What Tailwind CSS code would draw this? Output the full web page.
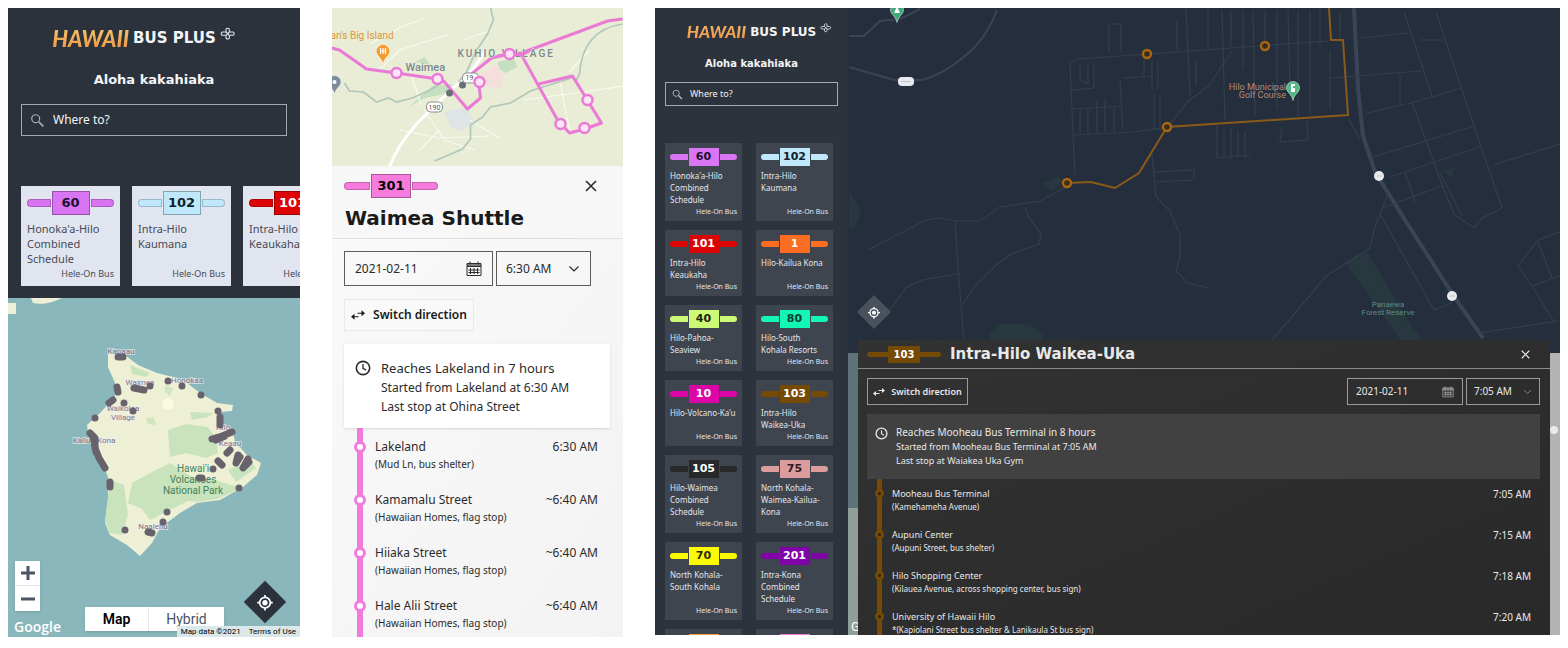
<!DOCTYPE html>
<html lang="en">
<head>
<meta charset="utf-8">
<title>Hawaii Bus Plus</title>
<script src="https://cdn.jsdelivr.net/npm/@tailwindcss/browser@4"></script>
</head>
<body class="bg-white font-['Noto_Sans','Open_Sans',sans-serif]">
<svg class="hidden">
  <symbol id="search" viewBox="0 0 24 24"><path fill="currentColor" d="M9.5 3a6.5 6.5 0 0 1 5 10.6l.3.4h.7l5.5 5.5-1.5 1.5-5.5-5.5v-.8l-.3-.2A6.5 6.5 0 1 1 9.5 3m0 1.7a4.8 4.8 0 1 0 0 9.6 4.8 4.8 0 0 0 0-9.6"/></symbol>
  <symbol id="plus" viewBox="0 0 24 20"><path fill="none" stroke="currentColor" stroke-width="1.6" d="M9 3c0-2 5-2 5 0v4h5c3 0 3 5 0 5h-5v4c0 2-5 2-5 0v-4H4c-3 0-3-5 0-5h5zM9 7l5 5M14 7l-5 5"/></symbol>
  <symbol id="locate" viewBox="0 0 24 24"><circle cx="12" cy="12" r="7.5" fill="none" stroke="currentColor" stroke-width="2.4"/><circle cx="12" cy="12" r="3.8" fill="currentColor"/><path stroke="currentColor" stroke-width="2.4" d="M12 1v4M12 19v4M1 12h4M19 12h4"/></symbol>
  <symbol id="close" viewBox="0 0 12 12"><path stroke="currentColor" stroke-width="1.6" d="M1 1l10 10M11 1L1 11"/></symbol>
  <symbol id="swap" viewBox="0 0 24 16"><path fill="currentColor" d="M18 0l6 5-6 5V6h-7V4h7zM6 6v4h7v2H6v4L0 11z"/></symbol>
  <symbol id="clock" viewBox="0 0 24 24"><circle cx="12" cy="12" r="10" fill="none" stroke="currentColor" stroke-width="2.4"/><path fill="none" stroke="currentColor" stroke-width="2" d="M12 6v6.5l4.5 2.7"/></symbol>
  <symbol id="calendar" viewBox="0 0 16 16"><path fill="none" stroke="currentColor" stroke-width="1" d="M1 2.5h14v12H1zM1 5.5h14M4 .5v3M12 .5v3M4.500 7v6M8 7v6M11.500 7v6M2.500 9h11M2.500 11.500h11"/><path fill="currentColor" d="M1 2.500h14v3H1z" opacity=".6"/></symbol>
  <symbol id="chevron" viewBox="0 0 12 8"><path fill="none" stroke="currentColor" stroke-width="1.200" d="M1.500 1.500L6 6l4.500-4.500"/></symbol>
  <symbol id="pin" viewBox="0 0 14 20"><path stroke="#fff" stroke-opacity=".5" d="M7 .5a6.500 6.500 0 0 1 6.500 6.500C13.500 11.500 8 13 7 19.500 6 13 .5 11.500.5 7A6.500 6.500 0 0 1 7 .5"/></symbol>
</svg>

<div class="grid h-screen grid-cols-[292fr_291fr_905fr] gap-8 px-2 pt-2 pb-[11px]">

  <!-- Mobile home -->
  <section class="flex min-w-0 flex-col overflow-hidden bg-[#2c323c]">
    <header class="flex flex-col px-[13px] pt-[14px] pb-3 text-white">
      <div class="flex h-8 items-center justify-center gap-1 pr-5">
        <span class="bg-linear-to-b from-[#f0d070] to-[#f08a3c] bg-clip-text font-['Lato',sans-serif] text-[22px] font-black text-transparent italic">HAWAII</span>
        <span class="font-['DejaVu_Sans',sans-serif] text-[15px] font-bold whitespace-nowrap text-gray-100">BUS PLUS</span>
        <svg class="mb-2 h-[14px] w-4 shrink-0 text-gray-200"><use href="#plus"/></svg>
      </div>
      <h1 class="mt-3 text-center font-['DejaVu_Sans',sans-serif] text-[13px] leading-7 font-bold text-gray-100">Aloha kakahiaka</h1>
      <label class="mt-[10px] flex h-8 items-center gap-[7px] border border-[#a3a7ae] px-[7px]">
        <svg class="size-[17px] shrink-0 text-[#b5b8bd]"><use href="#search"/></svg>
        <input type="text" placeholder="Where to?" class="min-w-0 flex-1 text-[12px] outline-none placeholder:text-gray-100">
      </label>
      <div id="mobile-routes" class="mt-[50px] -mr-[13px] flex gap-3 overflow-hidden"></div>
    </header>
    <div class="relative min-h-0 flex-1 overflow-hidden">
      <svg class="size-full" viewBox="8 298 292 339" preserveAspectRatio="xMidYMid slice" font-family="Roboto, sans-serif">
        <rect x="-400" y="0" width="1200" height="1000" fill="#8ab7bb"/>
        <path fill="#eef0d5" d="M8 303h8v11H8zM31 298h31q-16 8-29 5zM108 353l17 2 13 10 19 8 16 4 14 6 13 10 17 10 16 2-1 6-12 1 2 11 11 9 2 10 12 13 14 8-4 12-14 12-23 13-23 3-17 10-20 15-8 15-12 13-13-11-17-10-5-12 3-23V477l-8-20-12-24-1-8 13-12 15-16v-14l-7-16z"/>
        <g fill="#c9e3bc">
          <path d="M130 365l20 8-4 4-14-3zM168 430l18-6 22 3 8 12 2 14-12 5-20-5-16 4zM132 483l22-12 16-8 22 14 14 8 4 10 7 2-27 3-28 14-12 6-8-11-14-6zM180 500l28-22 34 10-25 11-20 3zM110 480l14 5 4 30-6 20-12-2-5-12zM228 470l22-10 6 8-20 14zM190 412l24 1-6 4-16 3z"/>
        </g>
        <path fill="#cfe6bf" d="M146 418l8-1 2 8-8-1zM165 385l8 3-3 8-5-4z"/>
        <circle cx="168" cy="404" r="6" fill="#fafbe0"/>
        <g font-size="8" fill="#7c7486" text-anchor="middle" stroke="#f0edf2" stroke-width="2" stroke-opacity=".6" paint-order="stroke">
          <text x="121" y="354">Kapaau</text><text x="140" y="385">Waimea</text><text x="187" y="383">Honokaa</text><text x="123" y="411">Waikoloa</text><text x="123" y="420">Village</text><text x="94" y="443">Kailua-Kona</text><text x="223" y="430">Hilo</text><text x="230" y="446">Keaau</text><text x="153" y="529">Naalehu</text>
        </g>
        <g font-size="10" fill="#43805a" text-anchor="middle"><text x="193" y="472">Hawai'i</text><text x="193" y="483">Volcanoes</text><text x="193" y="494">National Park</text></g>
        <g stroke="#67626b" stroke-width="7" stroke-linecap="round" stroke-linejoin="round" fill="none">
          <path d="M118 357h5M117 387l1 5M134 388l10 2M150 386h0M168 381h0M182 386h0M201 395h0M109 403l4-3M124 403h0M133 411h0M95 418h0M218 411h0M220 417v8M90 433l5 5v10l4 10 6 10M93 436l3 16M110 482v5M212 439l10-3 10-4M216 440l9-4M227 453l3-3M218 461l4 4M238 455l-2 8 4-6M248 459l-5 9 6-6M213 469h0M199 478h3M239 488h0M167 512h0M163 522h0M148 532l4 1M125 530h0"/>
        </g>
      </svg>
      <div class="absolute bottom-[26px] left-[7px] flex w-[25px] flex-col divide-y divide-gray-200 bg-white text-gray-600 shadow">
        <button aria-label="Zoom in" class="grid h-[25px] place-items-center"><svg class="size-[14px]" viewBox="0 0 14 14"><path stroke="currentColor" stroke-width="3" d="M7 0v14M0 7h14"/></svg></button>
        <button aria-label="Zoom out" class="grid h-[25px] place-items-center"><svg class="size-[14px]" viewBox="0 0 14 14"><path stroke="currentColor" stroke-width="3" d="M0 7h14"/></svg></button>
      </div>
      <span class="absolute bottom-0 left-[6px] font-['Open_Sans',sans-serif] text-[14px] font-semibold text-white">Google</span>
      <div class="absolute bottom-[6px] left-[77px] flex h-6 bg-white font-['Roboto',sans-serif] text-[14px] shadow">
        <button class="w-[63px] font-semibold text-black">Map</button><button class="w-[76px] border-l border-gray-200 text-gray-600">Hybrid</button>
      </div>
      <div class="absolute right-0 bottom-0 flex h-[11px] items-center gap-2 bg-[#dbe7e8] px-1 font-['Roboto',sans-serif] text-[8px] text-black"><span>Map data ©2021</span><a href="#terms">Terms of Use</a></div>
      <button aria-label="My location" class="absolute right-5 bottom-5 grid size-[30px] rotate-45 place-items-center bg-[#2c323c] text-white"><svg class="size-[17px] -rotate-45"><use href="#locate"/></svg></button>
    </div>
  </section>

  <!-- Mobile route details -->
  <section class="flex min-w-0 flex-col overflow-hidden bg-[#f7f7f7] text-[#2b2b2b]">
    <svg class="h-[158px] w-full shrink-0" viewBox="332 8 292 158" preserveAspectRatio="xMidYMid slice" font-family="Roboto, sans-serif">
      <rect x="0" y="0" width="1200" height="300" fill="#e9edd5"/>
      <path fill="#c5dfc0" d="M408 108l25-22 20-2-8 10-20 4-14 8zM498 62l16-4 4 9-12 6-6-4zM416 62l9-5 6 8z"/>
      <path fill="#f5dfdc" d="M481 74l16-10 8 15-4 9-18-2z"/><path fill="#dfe4e4" d="M445 112l22-5 8 14-12 10-12-4z"/>
      <g fill="none" stroke="#f8faef" stroke-width="1.200"><path d="M370 44l30-16 25-10M380 70l20-20 50-16M400 130l40 8 50-2M425 110l20 30 30 10M410 70l12 36M440 130l-20 20M470 120l30 18M524 100l60-8 40-6M492 30l-28 10M560 80l10 50M590 50l-20 22"/></g>
      <path fill="none" stroke="#fff" stroke-width="3" d="M390 167q8-22 28-44 34-34 46-44t22-30"/>
      <g fill="none" stroke="#b2c7bb" stroke-width="1.700"><path d="M491 8l3 12-6 14-12 18-9 20-8 10M345 83l5 8 14 1 13 10 12-4 8 4 16-4 18-8 14-10M435 161l28-12 8-10v-14l12-8 8-10 20-4 20-12 44-14M623 24q-40 6-43 50l-4 8"/></g>
      <path fill="none" stroke="#ea7ad6" stroke-width="3" stroke-linejoin="round" d="M332 48l8 2 27 19 30 4 41 6 7 3 23 27 13-11-2-16-6-9 19-15 18-4 12-1 86-32 15-2M522 55l36 65 12 13 15-4 17-6-29-47-34 8"/>
      <circle cx="450" cy="93" r="3.500" fill="#687074"/><circle cx="463" cy="85" r="3.500" fill="#687074"/>
      <g fill="#fff" stroke="#8a8f90"><rect x="427" y="102" width="16" height="10" rx="4"/><rect x="463" y="73" width="16" height="10" rx="4"/></g>
      <g font-size="7" fill="#555" text-anchor="middle"><text x="435" y="110">190</text><text x="470" y="80">19</text></g>
      <g font-weight="500" fill="#7b8793" stroke="#e9edd5" stroke-width="1" paint-order="stroke"><text x="406" y="71" font-size="11">Waimea</text><text x="458" y="57" font-size="10" letter-spacing="2">KUHIO VILLAGE</text></g>
      <path fill="none" stroke="#ea7ad6" stroke-width="3" d="M498 56l12-2 12 1 8-4"/>
      <text x="331" y="39" font-size="10" fill="#d99540">an's Big Island</text>
      <g fill="#fde4f8" stroke="#ea7ad6" stroke-width="2.400"><circle cx="397" cy="73" r="5"/><circle cx="438" cy="79" r="5"/><circle cx="480" cy="82" r="5"/><circle cx="510" cy="54" r="5"/><circle cx="588" cy="100" r="5"/><circle cx="561" cy="124" r="5"/><circle cx="585" cy="128" r="5"/></g>
      <use href="#pin" x="376" y="44" width="15" height="21" fill="#f39c2c"/><path d="M381 48v6M383.500 48v6M386 48v6M381 51h5" stroke="#fff" stroke-width="1.200"/>
      <use href="#pin" x="328" y="75" width="14" height="20" fill="#7d8c9c"/><circle cx="335" cy="82" r="2" fill="#fff"/>
    </svg>
    <div class="flex flex-col border-b border-[#e0e0e0] px-3 pt-2">
      <div class="flex items-center justify-between">
        <div class="flex items-center" data-badge="301|#f57bdc|#000|lg"></div>
        <button aria-label="Close" class="mr-[10px] p-1"><svg class="size-3"><use href="#close"/></svg></button>
      </div>
      <h2 class="mt-1 pb-1 pl-px font-['DejaVu_Sans',sans-serif] text-[20px] leading-8 font-bold text-[#1a1a1a]">Waimea Shuttle</h2>
    </div>
    <div class="flex min-h-0 flex-1 flex-col bg-linear-to-br from-[#f9f9f9] to-[#f3f3f3] pt-3 pr-[13px] pl-3">
      <div class="flex gap-[3px] text-[12px]">
        <label class="flex h-[35px] w-[149px] items-center border border-[#5c5c5c] px-[10px]">
          <input type="text" value="2021-02-11" aria-label="Date" class="min-w-0 flex-1 outline-none"><svg class="size-4 shrink-0"><use href="#calendar"/></svg>
        </label>
        <div class="grid h-[35px] w-[95px] items-center border border-[#5c5c5c]">
          <select aria-label="Time" class="h-full appearance-none pl-[9px] outline-none [grid-area:1/1]"><option>6:30 AM</option></select>
          <svg class="pointer-events-none mr-[10px] h-2 w-3 justify-self-end [grid-area:1/1]"><use href="#chevron"/></svg>
        </div>
      </div>
      <button class="mt-[13px] flex h-8 w-[130px] items-center justify-center gap-2 border border-[#e9e9e9] bg-[#f9f9f9] text-[12px] font-semibold text-[#1a1a1a]"><svg class="h-[10px] w-[14px]"><use href="#swap"/></svg>Switch direction</button>
      <div class="mt-[13px] flex gap-[10px] bg-white px-[11px] pt-[14px] pb-3 shadow">
        <svg class="mt-[2px] size-4 shrink-0"><use href="#clock"/></svg>
        <div><p class="text-[13px] leading-5">Reaches Lakeland in 7 hours</p><p class="text-[12px] leading-[19px]">Started from Lakeland at 6:30 AM</p><p class="text-[12px] leading-[19px]">Last stop at Ohina Street</p></div>
      </div>
      <ol id="mobile-stops" class="min-h-0 flex-1 overflow-hidden"></ol>
    </div>
  </section>

  <!-- Desktop -->
  <section class="mb-[2px] grid min-w-0 grid-cols-[193px_minmax(0,1fr)] overflow-hidden bg-[#2d333d] text-white">
    <aside class="flex min-h-0 flex-col overflow-hidden px-[10px] pt-3">
      <div class="flex h-6 items-center justify-center gap-1 pl-4">
        <span class="bg-linear-to-b from-[#f0c070] to-[#f08a3c] bg-clip-text font-['Lato',sans-serif] text-[17px] font-black text-transparent italic">HAWAII</span>
        <span class="font-['DejaVu_Sans',sans-serif] text-[12px] font-bold whitespace-nowrap text-gray-100">BUS PLUS</span>
        <svg class="mb-2 h-[10px] w-3 shrink-0 text-gray-200"><use href="#plus"/></svg>
      </div>
      <h1 class="mt-[10px] text-center font-['DejaVu_Sans',sans-serif] text-[10px] leading-5 font-bold text-gray-100">Aloha kakahiaka</h1>
      <label class="mt-2 flex h-6 shrink-0 items-center gap-[6px] border border-[#a3a7ae] px-[5px]">
        <svg class="size-[13px] shrink-0 text-[#c5c8cd]"><use href="#search"/></svg>
        <input type="text" placeholder="Where to?" class="min-w-0 flex-1 text-[9px] outline-none placeholder:text-gray-100">
      </label>
      <div id="desktop-routes" class="mt-[37px] mr-[5px] grid shrink-0 grid-cols-2 gap-x-[14px] gap-y-[9px]"></div>
    </aside>
    <main class="grid min-h-0 grid-cols-[minmax(0,1fr)] grid-rows-[332fr_295fr] overflow-hidden">
      <div class="relative row-span-2 overflow-hidden [grid-area:1/1/3/2]">
        <svg class="absolute inset-0 size-full" viewBox="848 8 712 627" preserveAspectRatio="xMidYMid slice" font-family="Roboto, sans-serif">
          <rect x="600" y="0" width="1200" height="700" fill="#252e3d"/>
          <path fill="#5d7379" d="M848 353h20v155h-20z"/><path fill="#909e9a" d="M848 508h20v130h-20z"/><path fill="#b3b3b3" d="M1540 353h30v290h-30z"/>
          <path fill="#27393f" d="M849 192l12 18-6 18-6 2zM1345 262l22-10 42 70 22 30h-22zM989 334l10-10h30l14 10v10h-54zM1042 184l16-8 4 6-10 9zM1443 170l12-2-4 10z"/>
          <g fill="none" stroke="#3a4454">
            <g stroke-width="2"><path d="M849 67l45 13h28q24-6 52-32 15-16 23-38M849 36h15l16-15 20-2 20-10"/></g>
            <path stroke-width="4" d="M1354 8l4 80 5 48 12 36 30 48 50 78 28 40"/>
          </g>
          <g fill="none" stroke="#343e4e" stroke-width="1.200">
            <path d="M868 250l58-30 14-2 16 3h24l20-14 40-6 30-16M955 220l4 60 5 60M890 310l16-22 16-8 36-6M1025 208l4 10 12 16-2 10-28 10-16 12-20 20-12 18M1072 62l6-3 70-5 110-8 70-5M1070 62l3 72 2 42M1074 135l60-3 34-5 20-26 20-14 24-36M1072 90l22-2V64M1080 66v14l8 4V64M1072 109l50-3M1080 110v23M1088 109v24M1097 100v33M1105 98v34M1114 108v24M1120 80l3 50M1123 78l30-2M1109 52V24h12v28M1144 60v16M1152 60v30M1158 62v26M1154 94v36M1160 95v36M1186 8l4 88M1177 20v30M1196 60v26M1152 155l4 42 14 14 10 24v22l-4 14 12 12 20 5M1154 172l40-2v10l-38 2"/>
            <path d="M1208 10v36M1222 10l3 110M1231 10v36M1243 10v60M1253 10l2 106M1265 10v30M1277 10v100M1288 10l2 80M1298 10v106M1310 10v104M1320 10v36M1330 50v60M1340 12v30M1217 125v33M1224 130v28M1231 128v30M1238 130v27M1245 132v26M1218 158l32-3M1282 126l-2 16 28-2-1-20M1330 78l92-7M1360 38l48-5M1404 12l28 84M1436 12l34 102 32 94-20 10-8 10-20-14-10-24-32-88M1408 104l54-16M1370 158l104-32M1390 177l90-30M1420 40h24M1400 76v26M1348 118l12 22M1382 208l60-22M1405 172l10 30M1380 214l54 96 18-7M1388 194l-14 36-4 18-44 28-30 36-24 28M1493 165l70-22M1440 172l22 44M1560 232l-22 8-20 26 14 20 22 36M1538 242l14 36M1532 286l28-10M1478 333l80-12M1365 114l40-10"/>
          </g>
          <path fill="none" stroke="#8a5a18" stroke-width="2" d="M1067 183l24-1 24 6 24-15 28-46 181-12-5-75h-12l-2-32"/>
          <g fill="#3a2d22" stroke="#a9680f" stroke-width="2.400"><circle cx="1067" cy="183" r="4"/><circle cx="1167" cy="127" r="4"/><circle cx="1147" cy="54" r="4"/><circle cx="1265" cy="46" r="4"/></g>
          <g fill="#e8eaf0"><rect x="898" y="77" width="16" height="9" rx="4"/><ellipse cx="1379" cy="176" rx="5" ry="5"/><ellipse cx="1452" cy="296" rx="5" ry="5"/><circle cx="1554" cy="430" r="4"/></g><path stroke="#bcc4cc" d="M901 81.500h10M1377 176h5M1450 296h5"/>
          <use href="#pin" x="890" y="3" width="14" height="20" fill="#3fa877"/><path d="M897 6l3 7h-6z" fill="#fff"/>
          <use href="#pin" x="1286" y="81" width="14" height="20" fill="#4dbb83"/><path d="M1291 84h4v2h-2v2h2v4h-4z" fill="#fff"/>
          <g font-size="9" fill="#b58a78" text-anchor="end"><text x="1286" y="90">Hilo Municipal</text><text x="1286" y="98">Golf Course</text></g>
          <g font-size="8" fill="#5f8a82" text-anchor="middle"><text x="1388" y="307">Panaewa</text><text x="1388" y="315">Forest Reserve</text></g>
          <text x="851" y="631" font-size="13" fill="#fff">G</text>
        </svg>
        <button aria-label="My location" class="absolute top-[292px] left-[14px] grid size-6 rotate-45 place-items-center bg-[#4a515d] text-white"><svg class="size-[13px] -rotate-45"><use href="#locate"/></svg></button>
      </div>
      <article class="relative mr-[10px] ml-[10px] flex min-h-0 flex-col overflow-hidden bg-linear-to-br from-[#323232] to-[#292929] text-[#e8e8e8] [grid-area:2/1]">
        <header class="flex h-[29px] shrink-0 items-center border-b border-[#8a8a8a] pl-[9px]">
          <div class="flex items-center" data-badge="103|#754a05|#fff|sm"></div>
          <h2 class="ml-[9px] font-['DejaVu_Sans',sans-serif] text-[15px] leading-6 font-bold">Intra-Hilo Waikea-Uka</h2>
          <button aria-label="Close" class="mr-5 ml-auto"><svg class="size-[9px]"><use href="#close"/></svg></button>
        </header>
        <div class="flex min-h-0 flex-1 flex-col pt-[9px] pr-[10px] pl-[9px]">
          <div class="flex gap-[3px] text-[10px]">
            <button class="mr-auto flex h-[27px] w-[101px] items-center justify-center gap-[6px] border border-[#9a9a9a] text-[9px] font-semibold whitespace-nowrap"><svg class="h-2 w-3 shrink-0"><use href="#swap"/></svg>Switch direction</button>
            <label class="flex h-[27px] w-[116px] items-center border border-[#9a9a9a] px-2">
              <input type="text" value="2021-02-11" aria-label="Date" class="min-w-0 flex-1 outline-none"><svg class="size-3 shrink-0 text-[#a5a5a5]"><use href="#calendar"/></svg>
            </label>
            <div class="grid h-[27px] w-[74px] items-center border border-[#9a9a9a]">
              <select aria-label="Time" class="h-full appearance-none pl-[7px] outline-none [grid-area:1/1]"><option>7:05 AM</option></select>
              <svg class="pointer-events-none mr-[7px] h-[6px] w-[9px] justify-self-end text-[#8a8a8a] [grid-area:1/1]"><use href="#chevron"/></svg>
            </div>
          </div>
          <div class="mt-[9px] flex gap-2 bg-[#414141] px-2 py-[11px]">
            <svg class="mt-[2px] size-[13px] shrink-0"><use href="#clock"/></svg>
            <div><p class="text-[10px] leading-[15px]">Reaches Mooheau Bus Terminal in 8 hours</p><p class="text-[9px] leading-[14px]">Started from Mooheau Bus Terminal at 7:05 AM</p><p class="text-[9px] leading-[14px]">Last stop at Waiakea Uka Gym</p></div>
          </div>
          <ol id="desktop-stops" class="min-h-0 flex-1 overflow-hidden"></ol>
        </div>
      </article>
    </main>
  </section>
</div>

<script>
const badge = (n, bg, fg, size) => size === 'lg'
  ? `<i class="h-2 w-[26px] rounded-l-full border border-black/20" style="background:${bg}"></i><b class="mx-px grid h-6 w-10 place-items-center border border-black/30 font-['DejaVu_Sans',sans-serif] text-[13px] font-bold" style="background:${bg};color:${fg}">${n}</b><i class="h-2 w-[26px] rounded-r-full border border-black/20" style="background:${bg}"></i>`
  : `<i class="h-[5px] w-[21px] rounded-l-full" style="background:${bg}"></i><b class="grid h-[17px] w-[32px] place-items-center font-['DejaVu_Sans',sans-serif] text-[10px] font-bold" style="background:${bg};color:${fg}">${n}</b><i class="h-[5px] w-[21px] rounded-r-full" style="background:${bg}"></i>`;
document.querySelectorAll('[data-badge]').forEach(e => e.innerHTML = badge(...e.dataset.badge.split('|')));

const routes = [
  ['60', "Honoka'a-Hilo Combined Schedule", '#d974f2', '#1c1030'],
  ['102', 'Intra-Hilo Kaumana', '#bfe9fa', '#10202c'],
  ['101', 'Intra-Hilo Keaukaha', '#dc0404', '#fff'],
  ['1', 'Hilo-Kailua Kona', '#fb6d20', '#fff'],
  ['40', 'Hilo-Pahoa-Seaview', '#ccfa76', '#1c2410'],
  ['80', 'Hilo-South Kohala Resorts', '#12f7b4', '#0b3a30'],
  ['10', "Hilo-Volcano-Ka'u", '#dc06a8', '#fff'],
  ['103', 'Intra-Hilo Waikea-Uka', '#754a05', '#fff'],
  ['105', 'Hilo-Waimea Combined Schedule', '#262829', '#fff'],
  ['75', 'North Kohala-Waimea-Kailua-Kona', '#dc9c9e', '#301c1c'],
  ['70', 'North Kohala-South Kohala', '#fcf905', '#2c2c08'],
  ['201', 'Intra-Kona Combined Schedule', '#8003a8', '#fff'],
  ['', '', '#f7a040', '#000'],
  ['', '', '#f07ad8', '#000'],
];
document.getElementById('mobile-routes').innerHTML = routes.slice(0, 3).map(([n, name, bg, fg]) => `
  <a href="#route" class="flex h-[100px] w-[99px] shrink-0 flex-col bg-[#e1e5ef] px-[6px] pt-[5px] pb-[6px] text-[#474b55]">
    <span class="flex items-center"><i class="h-2 flex-1 rounded-l-full border border-black/20" style="background:${bg}"></i><b class="mx-px grid h-6 w-[38px] place-items-center border border-black/30 font-['DejaVu_Sans',sans-serif] text-[13px] font-bold" style="background:${bg};color:${fg}">${n}</b><i class="h-2 flex-1 rounded-r-full border border-black/20" style="background:${bg}"></i></span>
    <span class="mt-[6px] text-[11px] leading-[15px]">${name}</span><span class="mt-auto text-right text-[9px] leading-3">Hele-On Bus</span>
  </a>`).join('');
document.getElementById('desktop-routes').innerHTML = routes.map(([n, name, bg, fg]) => `
  <a href="#route" class="flex min-h-[66px] flex-col bg-[#3f454f] px-[5px] pt-[5px] pb-1 text-[#e4e6ea]">
    <span class="flex items-center gap-px"><i class="h-[6px] flex-1 rounded-l-full" style="background:${bg}"></i><b class="grid h-[18px] w-[30px] place-items-center font-['DejaVu_Sans',sans-serif] text-[11px] font-bold" style="background:${bg};color:${fg}">${n}</b><i class="h-[6px] flex-1 rounded-r-full" style="background:${bg}"></i></span>
    ${name && `<span class="mt-[4px] text-[8px] leading-[12px]">${name}</span><span class="mt-auto text-right text-[7px] leading-[11px]">Hele-On Bus</span>`}
  </a>`).join('');

document.getElementById('mobile-stops').innerHTML = [
  ['Lakeland', '(Mud Ln, bus shelter)', '6:30 AM'],
  ['Kamamalu Street', '(Hawaiian Homes, flag stop)', '~6:40 AM'],
  ['Hiiaka Street', '(Hawaiian Homes, flag stop)', '~6:40 AM'],
  ['Hale Alii Street', '(Hawaiian Homes, flag stop)', '~6:40 AM'],
].map(([a, b, t]) => `
  <li class="grid h-[53px] grid-cols-[12px_1fr_auto] grid-rows-[29px_24px] gap-x-[9px] pr-3 pl-[10px] text-[12px]">
    <i class="mx-[3px] bg-[#f17bdc] [grid-area:1/1/3/2]"></i>
    <i class="mb-1 size-3 self-end rounded-full border-[3px] border-[#f17bdc] bg-white [grid-area:1/1]"></i>
    <span class="col-start-2 row-start-1 self-end leading-5">${a}</span><time class="col-start-3 row-start-1 self-end leading-5">${t}</time>
    <span class="col-start-2 row-start-2 text-[10px] leading-[14px]">${b}</span>
  </li>`).join('');
document.getElementById('desktop-stops').innerHTML = [
  ['Mooheau Bus Terminal', '(Kamehameha Avenue)', '7:05 AM'],
  ['Aupuni Center', '(Aupuni Street, bus shelter)', '7:15 AM'],
  ['Hilo Shopping Center', '(Kilauea Avenue, across shopping center, bus sign)', '7:18 AM'],
  ['University of Hawaii Hilo', '*(Kapiolani Street bus shelter &amp; Lanikaula St bus sign)', '7:20 AM'],
].map(([a, b, t]) => `
  <li class="grid h-[41px] grid-cols-[9px_1fr_auto] grid-rows-[22px_19px] gap-x-2 pr-[9px] pl-2 text-[10px]">
    <i class="mx-[2px] bg-[#754a05] [grid-area:1/1/3/2]"></i>
    <i class="mb-[3px] size-[9px] self-end rounded-full border-[3px] border-[#754a05] bg-[#2b2116] [grid-area:1/1]"></i>
    <span class="col-start-2 row-start-1 self-end text-[9px] leading-[14px]">${a}</span><time class="col-start-3 row-start-1 self-end leading-[14px]">${t}</time>
    <span class="col-start-2 row-start-2 text-[8px] leading-3">${b}</span>
  </li>`).join('');
</script>
</body>
</html>
